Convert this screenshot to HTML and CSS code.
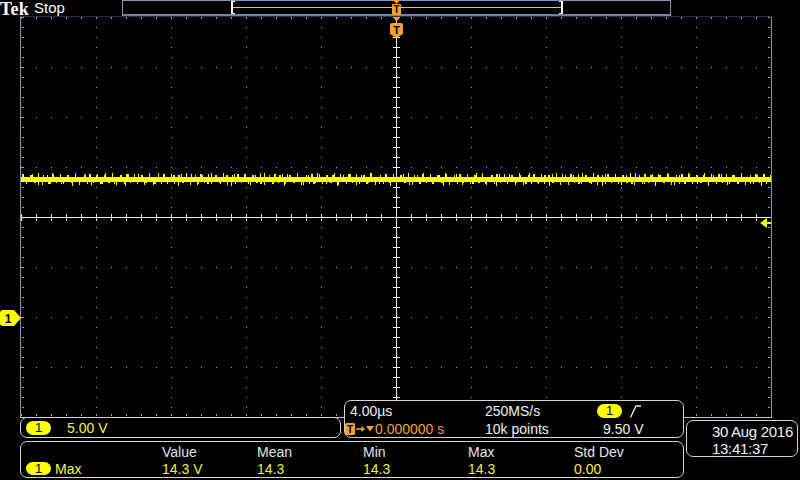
FILE: index.html
```html
<!DOCTYPE html>
<html>
<head>
<meta charset="utf-8">
<title>Tek scope</title>
<link rel="stylesheet" href="styles.css">
</head>
<body>
<div class="screen">
  <header class="topbar">
    <span class="logo">Tek</span><span class="state">Stop</span>
    <svg class="record" width="549" height="16" viewBox="0 0 549 16">
      <rect x="0" y="0" width="549" height="1" fill="#8a98b8"/>
      <rect x="0" y="14" width="549" height="2" fill="#7282a6"/>
      <rect x="0" y="0" width="1" height="16" fill="#8a98b8"/>
      <rect x="548" y="0" width="1" height="16" fill="#8a98b8"/>
      <rect x="111" y="7" width="328" height="1" fill="#e0e000"/>
      <rect x="109" y="1" width="2" height="13" fill="#fff"/>
      <rect x="109" y="1" width="4" height="1" fill="#fff"/>
      <rect x="109" y="13" width="4" height="1" fill="#fff"/>
      <rect x="439" y="1" width="2" height="13" fill="#fff"/>
      <rect x="437" y="1" width="4" height="1" fill="#fff"/>
      <rect x="437" y="13" width="4" height="1" fill="#fff"/>
      <polygon points="271,0 278,0 274.5,4" fill="#f5a031"/>
      <rect x="270" y="4" width="9" height="11" rx="1" fill="#f5a031"/>
      <text x="274.5" y="13" class="svg-t" font-size="10">T</text>
    </svg>
  </header>

  <div class="main">
    <div class="gutter-left">
      <svg class="ch-marker" width="21" height="16" viewBox="0 0 21 16">
        <path d="M3 0 H14 L21 8 L14 16 H3 Q0 16 0 13 V3 Q0 0 3 0 Z" fill="#ffff00"/>
        <text x="8" y="12.5" class="svg-t" font-size="12">1</text>
      </svg>
    </div>
    <svg class="graticule" width="752" height="402" viewBox="0 0 752 402">
      <defs>
        <pattern id="spkA" patternUnits="userSpaceOnUse" x="1" y="157" width="37" height="13">
          <rect x="2" y="1" width="1" height="3" fill="#ffff00"/>
          <rect x="9" y="2" width="2" height="2" fill="#ffff00"/>
          <rect x="17" y="0" width="1" height="4" fill="#ffff00"/>
          <rect x="26" y="2" width="1" height="2" fill="#ffff00"/>
          <rect x="31" y="1" width="2" height="3" fill="#ffff00"/>
          <rect x="5" y="9" width="1" height="2" fill="#ffff00"/>
          <rect x="13" y="9" width="2" height="1" fill="#ffff00"/>
          <rect x="21" y="9" width="1" height="3" fill="#ffff00"/>
          <rect x="29" y="9" width="1" height="2" fill="#ffff00"/>
          <rect x="35" y="9" width="1" height="1" fill="#ffff00"/>
        </pattern>
        <pattern id="spkB" patternUnits="userSpaceOnUse" x="8" y="157" width="53" height="13">
          <rect x="4" y="1" width="1" height="3" fill="#ffff00"/>
          <rect x="15" y="2" width="1" height="2" fill="#ffff00"/>
          <rect x="24" y="0" width="1" height="4" fill="#ffff00"/>
          <rect x="39" y="2" width="2" height="2" fill="#ffff00"/>
          <rect x="47" y="1" width="1" height="3" fill="#ffff00"/>
          <rect x="10" y="9" width="1" height="3" fill="#ffff00"/>
          <rect x="20" y="9" width="2" height="2" fill="#ffff00"/>
          <rect x="33" y="9" width="1" height="2" fill="#ffff00"/>
          <rect x="44" y="9" width="1" height="4" fill="#ffff00"/>
        </pattern>
      </defs>

      <g stroke="#a4a4a4" stroke-width="1">
        <g stroke-dasharray="1 14">
          <line x1="1" y1="51.5" x2="752" y2="51.5"/>
          <line x1="1" y1="101.5" x2="752" y2="101.5"/>
          <line x1="1" y1="151.5" x2="752" y2="151.5"/>
          <line x1="1" y1="251.5" x2="752" y2="251.5"/>
          <line x1="1" y1="301.5" x2="752" y2="301.5"/>
          <line x1="1" y1="351.5" x2="752" y2="351.5"/>
          <line x1="1" y1="2" x2="752" y2="2" stroke-width="2"/>
          <line x1="1" y1="399" x2="752" y2="399" stroke-width="2"/>
        </g>
        <g stroke-dasharray="1 9">
          <line x1="76.5" y1="1" x2="76.5" y2="402"/>
          <line x1="151.5" y1="1" x2="151.5" y2="402"/>
          <line x1="226.5" y1="1" x2="226.5" y2="402"/>
          <line x1="301.5" y1="1" x2="301.5" y2="402"/>
          <line x1="451.5" y1="1" x2="451.5" y2="402"/>
          <line x1="526.5" y1="1" x2="526.5" y2="402"/>
          <line x1="601.5" y1="1" x2="601.5" y2="402"/>
          <line x1="676.5" y1="1" x2="676.5" y2="402"/>
          <line x1="3" y1="1" x2="3" y2="402" stroke-width="2"/>
          <line x1="749" y1="1" x2="749" y2="402" stroke-width="2"/>
        </g>
      </g>

      <g stroke="#ececec">
        <line x1="1" y1="201.5" x2="751" y2="201.5"/>
        <line x1="1" y1="201.5" x2="751" y2="201.5" stroke-width="7" stroke-dasharray="1 14"/>
        <line x1="376.5" y1="1" x2="376.5" y2="401"/>
        <line x1="376.5" y1="1" x2="376.5" y2="401" stroke-width="7" stroke-dasharray="1 9"/>
      </g>

      <line x1="0.5" y1="0" x2="0.5" y2="402" stroke="#8494b8"/>
      <line x1="751.5" y1="0" x2="751.5" y2="402" stroke="#8494b8"/>
      <line x1="0" y1="0.5" x2="752" y2="0.5" stroke="#27324e"/>
      <line x1="0" y1="401.5" x2="752" y2="401.5" stroke="#c4c8d0"/>

      <rect x="1" y="161" width="750" height="5" fill="#ffff00"/>
      <rect x="1" y="157" width="750" height="13" fill="url(#spkA)"/>
      <rect x="1" y="157" width="750" height="13" fill="url(#spkB)"/>

      <polygon points="740,207 747,202 747,206 751,206 751,208 747,208 747,212" fill="#ffff00"/>

      <polygon points="373,1 380,1 376.5,6" fill="#f5a031"/>
      <path d="M372 7 H381 Q383 7 383 9 V18 L376.5 22 L370 18 V9 Q370 7 372 7 Z" fill="#f5a031"/>
      <text x="376.5" y="17.5" class="svg-t" font-size="11">T</text>
    </svg>
  </div>

  <div class="readouts">
    <div class="box chbox">
      <span class="pill">1</span>
      <span class="yel">5.00 V</span>
    </div>

    <div class="box timebase">
      <span class="tb-a">4.00µs</span>
      <span>250MS/s</span>
      <span class="tb-trig">
        <span class="pill">1</span>
        <svg class="edge" width="12" height="13" viewBox="0 0 12 13">
          <path d="M0.5 12.5 L6 1 H11" stroke="#f0f0f0" stroke-width="1.3" fill="none"/>
        </svg>
      </span>
      <span class="tb-pos">
        <svg width="30" height="12" viewBox="0 0 30 12">
          <rect x="0" y="0" width="10" height="12" rx="1.5" fill="#f5a031"/>
          <text x="5" y="10" class="svg-t" font-size="10">T</text>
          <line x1="11" y1="6" x2="18" y2="6" stroke="#f5a031" stroke-width="1.5"/>
          <polygon points="16.5,3 20,6 16.5,9" fill="#f5a031"/>
          <polygon points="21,3 29,3 25,8.5" fill="#f5a031"/>
        </svg>
        <span class="org">0.000000 s</span>
      </span>
      <span>10k points</span>
      <span class="tb-lvl">9.50 V</span>
    </div>

    <div class="box datebox">
      <span>30 Aug 2016</span>
      <span>13:41:37</span>
    </div>

    <div class="box meas">
      <span></span>
      <span>Value</span>
      <span>Mean</span>
      <span>Min</span>
      <span>Max</span>
      <span>Std Dev</span>
      <span class="m-src"><span class="pill pill-sm">1</span><span class="yel">Max</span></span>
      <span class="val">14.3 V</span>
      <span class="val">14.3</span>
      <span class="val">14.3</span>
      <span class="val">14.3</span>
      <span class="val">0.00</span>
    </div>
  </div>
</div>
</body>
</html>
```

FILE: styles.css
```css
* {
  box-sizing: border-box;
}

html,
body {
  margin: 0;
  padding: 0;
  background: #000;
}

body {
  width: 800px;
  height: 480px;
  overflow: hidden;
  font-family: "Liberation Sans", Arial, sans-serif;
  font-size: 14px;
  color: #e6e6e6;
}

.screen {
  display: flex;
  flex-direction: column;
  width: 800px;
  height: 480px;
}

.topbar {
  display: flex;
  align-items: flex-start;
  height: 16px;
}

.logo {
  width: 34px;
  margin-bottom: -2px;
  font-family: "Liberation Serif", "Times New Roman", serif;
  font-weight: bold;
  font-size: 18px;
  line-height: 18px;
  letter-spacing: 0.2px;
  color: #fff;
}

.state {
  width: 88px;
  font-size: 15px;
  line-height: 16px;
  color: #fff;
}

.record {
  display: block;
}

.svg-t {
  font-family: "Liberation Sans", Arial, sans-serif;
  font-weight: bold;
  fill: #000;
  text-anchor: middle;
}

.main {
  display: flex;
  height: 402px;
}

.gutter-left {
  position: relative;
  width: 20px;
  flex: none;
}

.ch-marker {
  position: absolute;
  left: 0;
  top: 294px;
  display: block;
}

.graticule {
  display: block;
  flex: none;
}

.readouts {
  display: grid;
  grid-template-columns: 20px 321px 3px 340px 2px 112px;
  grid-template-rows: 17px 3px 18px 3px 16px 21px;
  margin-top: -18px;
  position: relative;
}

.box {
  border: 1px solid #d4d4d4;
  border-radius: 7px;
  background: #000;
}

.pill {
  display: inline-flex;
  justify-content: center;
  align-items: center;
  width: 25px;
  height: 14px;
  border-radius: 7px;
  background: #ffff00;
  color: #000;
  font-size: 13px;
  line-height: 14px;
}

.pill-sm {
  height: 13px;
}

.yel {
  color: #f4f44e;
}

.org {
  color: #f5a031;
}

.chbox {
  grid-column: 2;
  grid-row: 2 / 4;
  display: flex;
  align-items: center;
  padding-left: 5px;
  line-height: 16px;
}

.chbox .pill {
  margin-right: 16px;
}

.timebase {
  grid-column: 4;
  grid-row: 1 / 4;
  display: grid;
  grid-template-columns: 140px 112px 1fr;
  grid-template-rows: 18px 17px;
  align-items: center;
  padding-top: 1px;
  color: #f0f0f0;
}

.tb-a {
  padding-left: 5px;
}

.tb-trig {
  display: flex;
  align-items: center;
}

.tb-trig .edge {
  display: block;
  margin-left: 8px;
}

.tb-pos {
  display: flex;
  align-items: center;
}

.tb-pos svg {
  display: block;
}

.tb-lvl {
  padding-left: 6px;
}

.datebox {
  grid-column: 6;
  grid-row: 3 / 6;
  display: flex;
  flex-direction: column;
  padding: 2px 0 0 25px;
  font-size: 15px;
  line-height: 17px;
  letter-spacing: -0.3px;
  color: #f2f2f2;
}

.meas {
  grid-column: 2 / 5;
  grid-row: 5 / 7;
  display: grid;
  grid-template-columns: 141px 95px 106px 105px 106px 1fr;
  grid-template-rows: 17px 17px;
  align-items: center;
  padding-top: 1px;
}

.m-src {
  display: flex;
  align-items: center;
  padding-left: 5px;
}

.m-src .pill {
  margin-right: 4px;
}

.val {
  color: #eeee55;
}
```
